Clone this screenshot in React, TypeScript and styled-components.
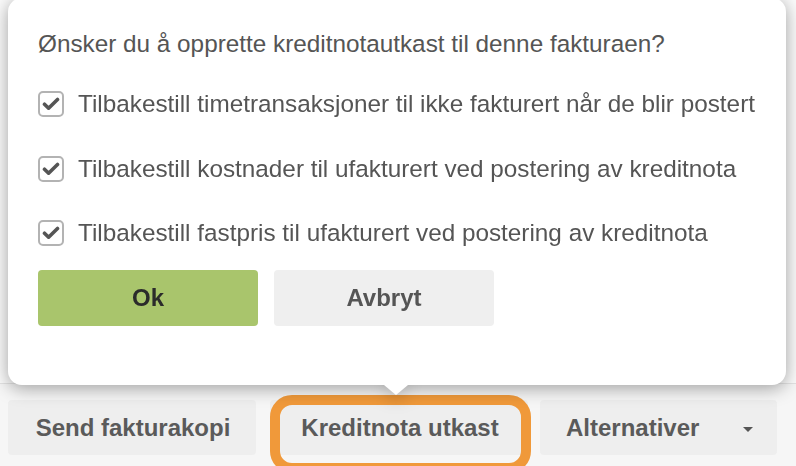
import styled, { createGlobalStyle } from "styled-components";

const GlobalStyle = createGlobalStyle`
  html, body {
    margin: 0;
    padding: 0;
    background: #fbfbfb;
  }
  body {
    font-family: "Liberation Sans", Arial, sans-serif;
  }
`;

const options = [
  "Tilbakestill timetransaksjoner til ikke fakturert når de blir postert",
  "Tilbakestill kostnader til ufakturert ved postering av kreditnota",
  "Tilbakestill fastpris til ufakturert ved postering av kreditnota",
];

export default function App() {
  return (
    <Page>
      <GlobalStyle />
      <Backdrop />
      <Toolbar>
        <BarButton width={248}>Send fakturakopi</BarButton>
        <Highlighted>
          <BarButton width={258}>Kreditnota utkast</BarButton>
          <Ring />
        </Highlighted>
        <BarButton width={237} align="space-between">
          Alternativer
          <Caret />
        </BarButton>
      </Toolbar>

      <Popover>
        <Panel>
          <Question>Ønsker du å opprette kreditnotautkast til denne fakturaen?</Question>
          <Options>
            {options.map((text) => (
              <Option key={text}>
                <Checkbox>
                  <svg width="18" height="14" viewBox="0 0 18 14">
                    <path d="M2.5 7.2 L6.6 11.2 L15.5 2.5" fill="none" stroke="#555" strokeWidth="3.6" strokeLinecap="round" strokeLinejoin="round" />
                  </svg>
                </Checkbox>
                {text}
              </Option>
            ))}
          </Options>
          <Actions>
            <ActionButton primary>Ok</ActionButton>
            <ActionButton>Avbryt</ActionButton>
          </Actions>
        </Panel>
        <Arrow />
      </Popover>
    </Page>
  );
}

const Page = styled.div`
  position: relative;
  width: 796px;
  height: 466px;
  overflow: hidden;
  display: flex;
  flex-direction: column;
`;

const Backdrop = styled.div`
  height: 383px;
  background: #fbfbfb;
`;

const Toolbar = styled.div`
  flex: 1;
  display: flex;
  gap: 14px;
  padding: 16px 0 0 8px;
  background: #f6f6f6;
  border-top: 1px solid #e3e3e3;
  & > :last-child {
    margin-left: -2px;
  }
`;

const BarButton = styled.div<{ width: number; align?: string }>`
  width: ${(p) => p.width}px;
  height: 55px;
  box-sizing: border-box;
  padding: 0 24px 0 26px;
  display: flex;
  align-items: center;
  justify-content: ${(p) => p.align || "center"};
  background: #eeeeee;
  border-radius: 4px;
  color: #5a5a5a;
  font-size: 24px;
  font-weight: bold;
`;

const Highlighted = styled.div`
  position: relative;
`;

const Ring = styled.div`
  position: absolute;
  top: -5px;
  bottom: -7px;
  left: 0;
  right: -3px;
  border: 10px solid #f0993a;
  border-radius: 22px;
`;

const Caret = styled.span`
  width: 0;
  height: 0;
  border-left: 5.5px solid transparent;
  border-right: 5.5px solid transparent;
  border-top: 5.5px solid #555;
  margin-top: 3px;
`;

const Popover = styled.div`
  position: absolute;
  top: -2px;
  left: 8px;
  width: 778px;
  filter: drop-shadow(0 3px 9px rgba(0, 0, 0, 0.36));
`;

const Panel = styled.div`
  height: 387px;
  box-sizing: border-box;
  padding: 31px 0 0 30px;
  background: #fff;
  border-radius: 14px;
  color: #555;
  font-size: 24.3px;
`;

const Question = styled.div`
  line-height: 30px;
`;

const Options = styled.div`
  display: flex;
  flex-direction: column;
  gap: 34.5px;
  margin-top: 30px;
`;

const Option = styled.label`
  display: flex;
  align-items: center;
  gap: 14px;
  height: 30px;
  line-height: 30px;
`;

const Checkbox = styled.span`
  width: 26px;
  height: 26px;
  box-sizing: border-box;
  border: 2px solid #b3b3b3;
  border-radius: 5px;
  display: flex;
  align-items: center;
  justify-content: center;
`;

const Actions = styled.div`
  display: flex;
  gap: 16px;
  margin-top: 22px;
`;

const ActionButton = styled.div<{ primary?: boolean }>`
  width: 220px;
  height: 56px;
  display: flex;
  align-items: center;
  justify-content: center;
  border-radius: 4px;
  background: ${(p) => (p.primary ? "#a9c56c" : "#efefef")};
  color: ${(p) => (p.primary ? "#2b2b2b" : "#555")};
  font-size: 24px;
  font-weight: bold;
`;

const Arrow = styled.div`
  position: absolute;
  left: 376px;
  top: 387px;
  width: 0;
  height: 0;
  border-left: 12px solid transparent;
  border-right: 12px solid transparent;
  border-top: 10px solid #fff;
`;
